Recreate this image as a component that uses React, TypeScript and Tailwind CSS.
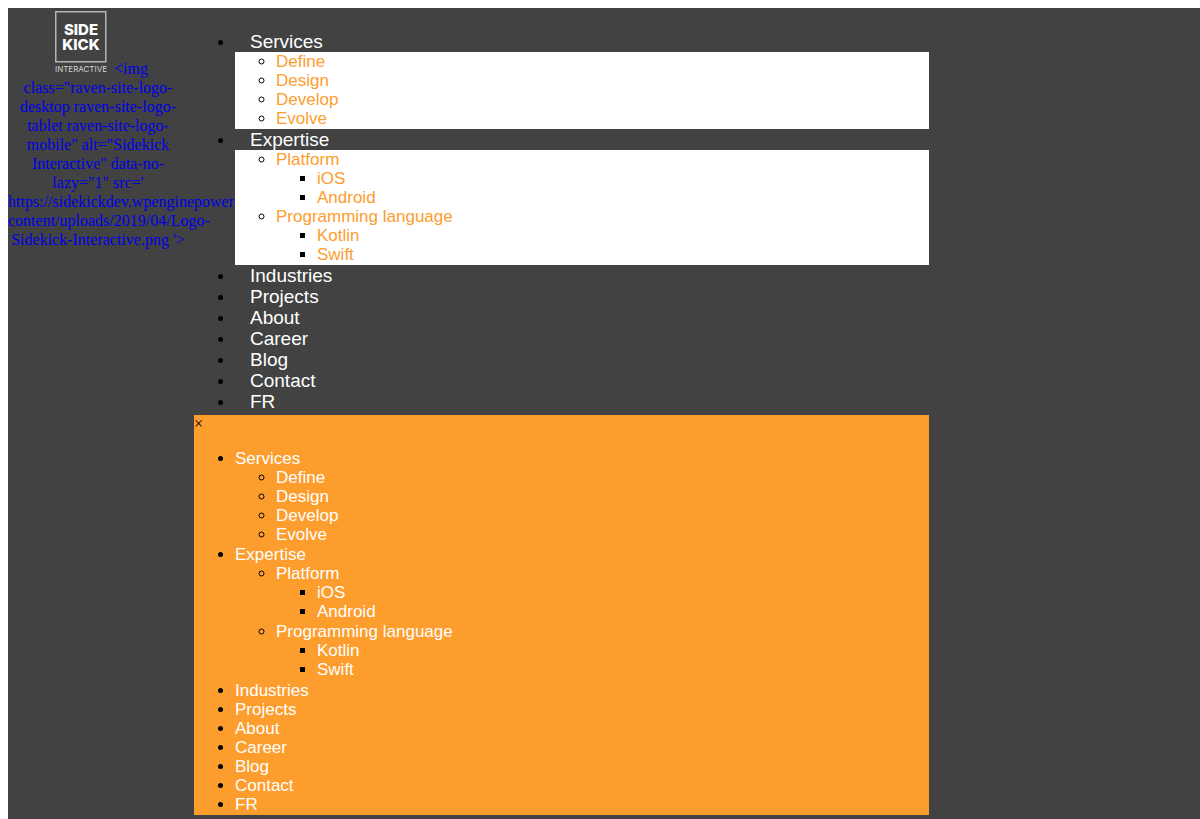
import clsx from "clsx";

interface MenuItem {
  label: string;
  children?: MenuItem[];
}

const MENU: MenuItem[] = [
  {
    label: "Services",
    children: [{ label: "Define" }, { label: "Design" }, { label: "Develop" }, { label: "Evolve" }],
  },
  {
    label: "Expertise",
    children: [
      { label: "Platform", children: [{ label: "iOS" }, { label: "Android" }] },
      { label: "Programming language", children: [{ label: "Kotlin" }, { label: "Swift" }] },
    ],
  },
  { label: "Industries" },
  { label: "Projects" },
  { label: "About" },
  { label: "Career" },
  { label: "Blog" },
  { label: "Contact" },
  { label: "FR" },
];

const LOGO_MARKUP = [
  'class="raven-site-logo-',
  "desktop raven-site-logo-",
  "tablet raven-site-logo-",
  'mobile" alt="Sidekick',
  'Interactive" data-no-',
  "lazy=\"1\" src='",
  "https://sidekickdev.wpenginepowered.com/wp-",
  "content/uploads/2019/04/Logo-",
  "Sidekick-Interactive.png '>",
];

function Logo() {
  return (
    <svg className="inline-block h-[63px] w-[62px] align-baseline" viewBox="0 0 62 63" role="img" aria-label="Sidekick Interactive">
      <rect x="7.75" y="0.75" width="50" height="50" fill="none" stroke="#b5b5b5" strokeWidth="1.5" />
      <g fill="#fff" textAnchor="middle" fontFamily="Inter, sans-serif">
        <text x="33" y="24" fontSize="15" fontWeight="800">SIDE</text>
        <text x="33" y="39" fontSize="15" fontWeight="800">KICK</text>
        <text x="33" y="61" fontSize="8" fill="#d4d4d4">INTERACTIVE</text>
      </g>
    </svg>
  );
}

function SubMenu({ items, depth, desktop }: { items: MenuItem[]; depth: number; desktop: boolean }) {
  return (
    <ul
      className={clsx(
        "pl-[41px] text-[17px] leading-[19px]",
        depth === 1 ? "list-[circle]" : "list-[square]",
        desktop && depth === 1 && "bg-white",
        (!desktop || depth === 1) && "pb-px"
      )}
    >
      {items.map((item) => (
        <li key={item.label}>
          <a href="#" className={clsx("block", desktop ? "text-[#fd9d2e]" : "text-white")}>{item.label}</a>
          {item.children && <SubMenu items={item.children} depth={depth + 1} desktop={desktop} />}
        </li>
      ))}
    </ul>
  );
}

export default function App() {
  return (
    <div className="min-h-screen bg-white pt-2 pl-2 font-['Liberation_Sans',Arial,sans-serif] text-black">
      <header className="flex min-h-[calc(100vh-8px)] items-start bg-[#424242]">
        <div className="w-[186px] shrink-0 pr-[6px]">
          <a href="#" className="block pt-[3px] text-center font-['Liberation_Serif',serif] text-[16px] leading-[19px] whitespace-nowrap text-[#0000e6]">
            <span className="block">
              <Logo /> &lt;img
            </span>
            {LOGO_MARKUP.map((line) => (
              <span key={line} className="block">{line}</span>
            ))}
          </a>
        </div>

        <div className="relative min-w-0 flex-1">
          <nav className="pt-[23px] pb-[3px]" aria-label="Main">
            <ul className="list-disc pl-[41px] text-[17px] leading-[21px]">
              {MENU.map((item) => (
                <li key={item.label}>
                  <a href="#" className="block pl-[15px] text-[19px] text-white">{item.label}</a>
                  {item.children && <SubMenu items={item.children} depth={1} desktop />}
                </li>
              ))}
            </ul>
          </nav>

          <nav className="bg-[#fd9d2e]" aria-label="Mobile">
            <button type="button" aria-label="Close menu" className="block pb-4 font-['Liberation_Serif',serif] text-[16px] leading-[18px]">
              ×
            </button>
            <ul className="list-disc pb-px pl-[41px] text-[17px] leading-[19px]">
              {MENU.map((item) => (
                <li key={item.label}>
                  <a href="#" className="block text-white">{item.label}</a>
                  {item.children && <SubMenu items={item.children} depth={1} desktop={false} />}
                </li>
              ))}
            </ul>
          </nav>
        </div>

        <div className="w-[271px] shrink-0" />
      </header>
    </div>
  );
}
